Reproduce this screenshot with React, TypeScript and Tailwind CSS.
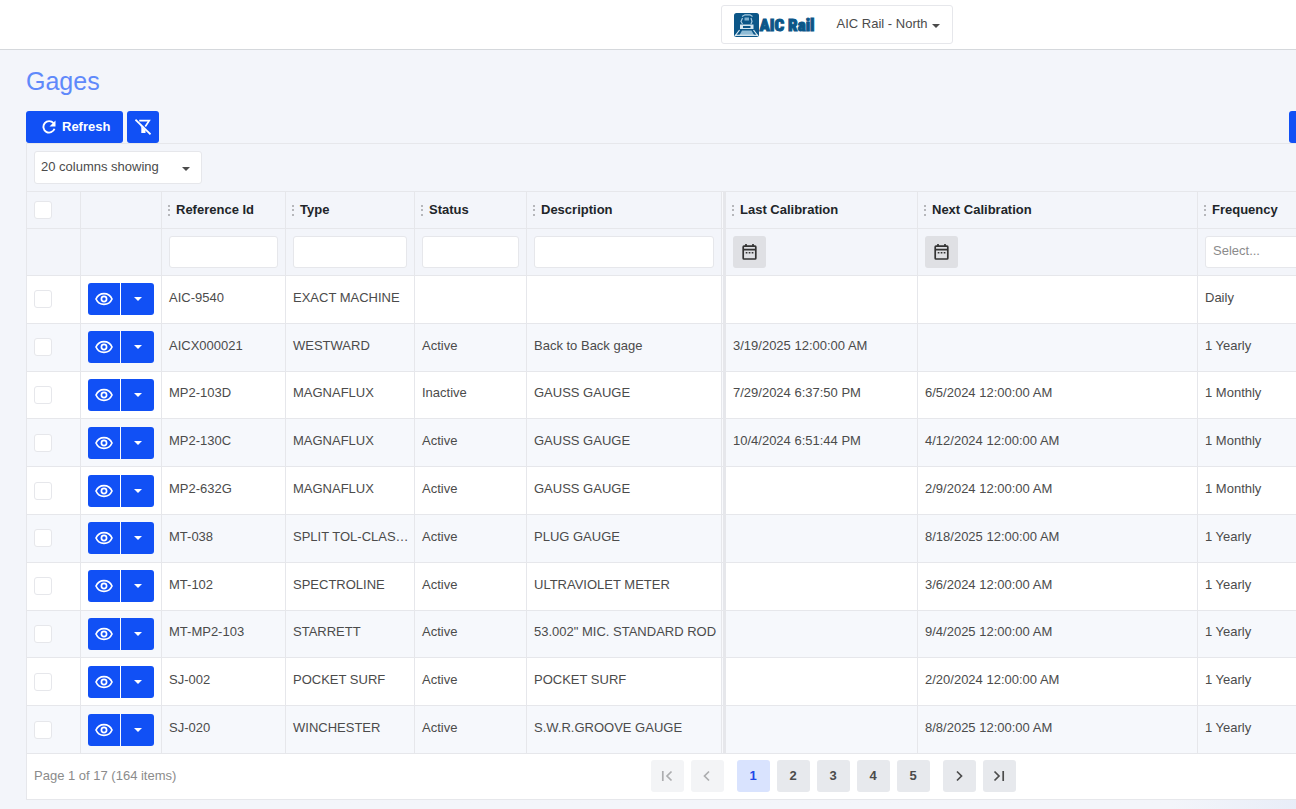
import { useState } from 'react'

type Gage = {
  id: string
  type: string
  status: string
  description: string
  last: string
  next: string
  frequency: string
}

const GAGES: Gage[] = [
  { id: 'AIC-9540', type: 'EXACT MACHINE', status: '', description: '', last: '', next: '', frequency: 'Daily' },
  { id: 'AICX000021', type: 'WESTWARD', status: 'Active', description: 'Back to Back gage', last: '3/19/2025 12:00:00 AM', next: '', frequency: '1 Yearly' },
  { id: 'MP2-103D', type: 'MAGNAFLUX', status: 'Inactive', description: 'GAUSS GAUGE', last: '7/29/2024 6:37:50 PM', next: '6/5/2024 12:00:00 AM', frequency: '1 Monthly' },
  { id: 'MP2-130C', type: 'MAGNAFLUX', status: 'Active', description: 'GAUSS GAUGE', last: '10/4/2024 6:51:44 PM', next: '4/12/2024 12:00:00 AM', frequency: '1 Monthly' },
  { id: 'MP2-632G', type: 'MAGNAFLUX', status: 'Active', description: 'GAUSS GAUGE', last: '', next: '2/9/2024 12:00:00 AM', frequency: '1 Monthly' },
  { id: 'MT-038', type: 'SPLIT TOL-CLAS…', status: 'Active', description: 'PLUG GAUGE', last: '', next: '8/18/2025 12:00:00 AM', frequency: '1 Yearly' },
  { id: 'MT-102', type: 'SPECTROLINE', status: 'Active', description: 'ULTRAVIOLET METER', last: '', next: '3/6/2024 12:00:00 AM', frequency: '1 Yearly' },
  { id: 'MT-MP2-103', type: 'STARRETT', status: 'Active', description: '53.002" MIC. STANDARD ROD', last: '', next: '9/4/2025 12:00:00 AM', frequency: '1 Yearly' },
  { id: 'SJ-002', type: 'POCKET SURF', status: 'Active', description: 'POCKET SURF', last: '', next: '2/20/2024 12:00:00 AM', frequency: '1 Yearly' },
  { id: 'SJ-020', type: 'WINCHESTER', status: 'Active', description: 'S.W.R.GROOVE GAUGE', last: '', next: '8/8/2025 12:00:00 AM', frequency: '1 Yearly' },
]

const HEADINGS = ['Reference Id', 'Type', 'Status', 'Description', 'Last Calibration', 'Next Calibration', 'Frequency']

const CELL = 'border-r border-b border-[#e6e7eb] px-[7px]'
// right edge of the pinned columns: a hairline, a gap, then a thick rule
const PINNED = 'border-r-[3px] border-b border-[#e6e7eb] pl-[7px] pr-[9px] shadow-[inset_-1px_0_0_#f8f9fc,inset_-2px_0_0_#e6e7eb]'

function Caret({ className }: { className: string }) {
  return (
    <svg viewBox="0 0 8 4" className={className} fill="currentColor" aria-hidden="true">
      <path d="M0 0h8L4 4z" />
    </svg>
  )
}

function EyeIcon() {
  return (
    <svg viewBox="0 0 18 14" className="h-[14px] w-[18px]" fill="none" stroke="currentColor" strokeWidth="1.7" aria-hidden="true">
      <path d="M1 7C2.6 3.4 5.5 1.6 9 1.6S15.4 3.4 17 7c-1.6 3.6-4.5 5.4-8 5.4S2.6 10.6 1 7z" />
      <circle cx="9" cy="7" r="2.6" />
    </svg>
  )
}

function RefreshIcon() {
  return (
    <svg viewBox="0 0 14 14" className="h-[14px] w-[14px]" aria-hidden="true">
      <path d="M11.5 3.2A5.7 5.7 0 1 0 12.5 8.8" fill="none" stroke="currentColor" strokeWidth="1.9" />
      <path d="M13.5 0.5v6h-6z" fill="currentColor" />
    </svg>
  )
}

function ClearFilterIcon() {
  return (
    <svg viewBox="0 0 16 16" className="h-4 w-4" aria-hidden="true">
      <path d="M4.2 1.7h10L10.3 7.5" fill="none" stroke="currentColor" strokeWidth="1.7" />
      <path d="M5.2 6.2l5.3 5V14H6.3V8.5z" fill="currentColor" />
      <path d="M0.5 0.7l15 14.6" stroke="currentColor" strokeWidth="1.7" />
    </svg>
  )
}

function CalendarIcon() {
  return (
    <svg viewBox="0 0 15 16" className="h-4 w-[15px]" fill="none" stroke="currentColor" aria-hidden="true">
      <rect x="1.2" y="2.2" width="12.6" height="12.8" rx="0.8" strokeWidth="1.7" />
      <path d="M4 0v3M11 0v3M1 5.7h13" strokeWidth="1.7" />
      <path d="M3.7 8.7h1.7M6.7 8.7h1.7M9.7 8.7h1.7" strokeWidth="1.6" />
    </svg>
  )
}

function Grip() {
  return (
    <svg viewBox="0 0 2 12" className="h-3 w-[2px] shrink-0" fill="#b6b7bb" aria-hidden="true">
      <path d="M0 1h2v2H0zM0 5h2v2H0zM0 10h2v2H0z" />
    </svg>
  )
}

function TrainLogo() {
  return (
    <svg viewBox="0 0 25 24" className="h-6 w-[25px]" aria-hidden="true">
      <rect width="25" height="24" rx="2.5" fill="#0b5688" />
      <path d="M8 3.5l3-1.7h5l2.5 1.7M8.5 5L7 8.5l1.5 2.5M17 5l1 3.5-1 2.5" fill="none" stroke="#a9cbe0" strokeWidth="1.2" />
      <path d="M10.5 4.5h4.5v3h-4.5z" fill="#7fb0cf" />
      <path d="M6 11.5h13.5v4.5H6z" fill="#d4e6f0" />
      <path d="M9 13h7.5v2H9z" fill="#0b5688" />
      <path d="M5.5 17L1 23M19.5 17L24 23" stroke="#dcebf3" strokeWidth="1.2" />
      <path d="M8 17.5h9.5l2.5 4.5H5.5z" fill="#8fbcd6" />
      <path d="M1 22.3h23" stroke="#e6f1f7" strokeWidth="1.2" />
    </svg>
  )
}

function PageArrow({ d }: { d: string }) {
  return (
    <svg viewBox="0 0 12 12" className="h-3 w-3" fill="none" stroke="currentColor" strokeWidth="1.7" aria-hidden="true">
      <path d={d} />
    </svg>
  )
}

function Tick({ label }: { label: string }) {
  return (
    <input
      type="checkbox"
      aria-label={label}
      className="block size-[18px] appearance-none rounded-[3px] border border-[#e6e7eb] bg-white checked:bg-[#1150f5]"
    />
  )
}

function FilterInput({ label }: { label: string }) {
  return <input type="text" aria-label={label} className="block h-8 w-full rounded-[3px] border border-[#e6e7eb] bg-white px-2" />
}

function DateFilter({ label }: { label: string }) {
  return (
    <button type="button" aria-label={label} className="flex h-8 w-[33px] items-center justify-center rounded-[3px] bg-[#dfe0e4] text-[#333]">
      <CalendarIcon />
    </button>
  )
}

const PAGE_BUTTON = 'flex h-8 w-[33px] items-center justify-center rounded-[3px]'

export default function App() {
  const [page, setPage] = useState(1)

  return (
    <div className="min-h-screen overflow-hidden bg-[#f3f5fa] font-['Liberation_Sans',Arial,sans-serif] text-[13px] leading-5 text-[#4b4b4b]">
      <header className="flex h-[50px] items-center justify-center border-b border-[#d5d8dc] bg-white pl-[378px]">
        <div className="flex h-[39px] items-center rounded-[3px] border border-[#e6e7eb] px-3">
          <a href="#home" aria-label="AIC Rail" className="flex items-center">
            <TrainLogo />
            <span className="font-['Roboto_Condensed','Roboto',sans-serif] text-[17px] font-black text-[#0b5688] [-webkit-text-stroke:1px_#0b5688]">
              AIC Rail
            </span>
          </a>
          <button type="button" className="ml-[22px] flex items-center gap-1 pb-[2px]">
            AIC Rail - North
            <Caret className="mt-1 h-[4px] w-[8px]" />
          </button>
        </div>
      </header>

      <main className="pl-[26px]">
        <div className="w-full min-w-[1614px]">
          <h1 className="pt-[13px] text-[25px] leading-9 text-[#5f89fa]">Gages</h1>

          <div className="mt-3 flex max-w-[1360px] justify-between">
            <div className="flex gap-1">
              <button type="button" className="flex h-8 items-center gap-[6px] rounded-[3px] bg-[#1150f5] pr-[13px] pl-4 font-bold text-white">
                <RefreshIcon />
                Refresh
              </button>
              <button type="button" aria-label="Clear filters" className="flex size-8 items-center justify-center rounded-[3px] bg-[#1150f5] text-white">
                <ClearFilterIcon />
              </button>
            </div>
            <button type="button" aria-label="Add gage" className="h-8 w-[97px] rounded-[3px] bg-[#1150f5]" />
          </div>

          <section className="border border-[#e6e7eb]">
            <div className="border-b border-[#e6e7eb] p-[7px]">
              <button type="button" className="flex h-[33px] w-[168px] items-center justify-between rounded-[3px] border border-[#e6e7eb] bg-white pr-[11px] pb-[2px] pl-[6px]">
                20 columns showing
                <Caret className="mt-1 h-[4px] w-[8px]" />
              </button>
            </div>

            <table className="w-full table-fixed border-separate border-spacing-0 text-left">
              <colgroup>
                <col className="w-[54px]" />
                <col className="w-[81px]" />
                <col className="w-[124px]" />
                <col className="w-[129px]" />
                <col className="w-[112px]" />
                <col className="w-[199px]" />
                <col className="w-[192px]" />
                <col className="w-[280px]" />
                <col />
              </colgroup>
              <thead className="text-[#212529]">
                <tr className="h-[37px]">
                  <th className={CELL}>
                    <Tick label="Select all gages" />
                  </th>
                  <th className={CELL} />
                  {HEADINGS.map((heading) => (
                    <th key={heading} className={heading === 'Description' ? PINNED : CELL}>
                      <div className="-ml-px flex items-center gap-[6px]">
                        <Grip />
                        {heading}
                      </div>
                    </th>
                  ))}
                </tr>
                <tr className="h-[47px]">
                  <td className={CELL} />
                  <td className={CELL} />
                  <td className={CELL}><FilterInput label="Filter reference id" /></td>
                  <td className={CELL}><FilterInput label="Filter type" /></td>
                  <td className={CELL}><FilterInput label="Filter status" /></td>
                  <td className={PINNED}><FilterInput label="Filter description" /></td>
                  <td className={CELL}><DateFilter label="Filter last calibration" /></td>
                  <td className={CELL}><DateFilter label="Filter next calibration" /></td>
                  <td className={CELL}>
                    <select aria-label="Filter frequency" defaultValue="" className="block h-8 w-full appearance-none rounded-[3px] border border-[#e6e7eb] bg-white px-[7px] pb-[2px] text-[#8b8b8b]">
                      <option value="">Select...</option>
                      <option>Daily</option>
                      <option>1 Monthly</option>
                      <option>1 Yearly</option>
                    </select>
                  </td>
                </tr>
              </thead>
              <tbody className="h-[478px]">
                {GAGES.map((gage) => (
                  <tr key={gage.id} className="bg-white even:bg-[#f6f8fc]">
                    <td className={CELL}>
                      <Tick label={`Select ${gage.id}`} />
                    </td>
                    <td className={CELL}>
                      <div className="flex gap-px text-white">
                        <button type="button" aria-label={`View ${gage.id}`} className="flex h-8 w-8 items-center justify-center rounded-l-[3px] bg-[#1150f5]">
                          <EyeIcon />
                        </button>
                        <button type="button" aria-label={`More actions for ${gage.id}`} className="flex h-8 w-[33px] items-center justify-center rounded-r-[3px] bg-[#1150f5]">
                          <Caret className="h-[4px] w-[8px]" />
                        </button>
                      </div>
                    </td>
                    <td className={`${CELL} pb-[3px]`}>{gage.id}</td>
                    <td className="border-r border-b border-[#e6e7eb] pr-px pb-[3px] pl-[7px] whitespace-nowrap">{gage.type}</td>
                    <td className={`${CELL} pb-[3px]`}>{gage.status}</td>
                    <td className={`${PINNED} pb-[3px] whitespace-nowrap`}>{gage.description}</td>
                    <td className={`${CELL} pb-[3px]`}>{gage.last}</td>
                    <td className={`${CELL} pb-[3px]`}>{gage.next}</td>
                    <td className={`${CELL} pb-[3px]`}>{gage.frequency}</td>
                  </tr>
                ))}
              </tbody>
            </table>

            <footer className="flex h-[45px] items-center bg-white px-[7px] pb-[2px]">
              <span className="flex-1 text-[#8b8b8b]">Page 1 of 17 (164 items)</span>
              <nav aria-label="Pages" className="flex gap-[7px] font-bold">
                <button type="button" disabled aria-label="First page" className={`${PAGE_BUTTON} bg-[#f3f4f6] text-[#acadaf]`}>
                  <PageArrow d="M1.8 1v10M10.5 1.5L6 6l4.5 4.5" />
                </button>
                <button type="button" disabled aria-label="Previous page" className={`${PAGE_BUTTON} bg-[#f3f4f6] text-[#acadaf]`}>
                  <PageArrow d="M8 1.5L3.5 6 8 10.5" />
                </button>
                <div className="mx-[6px] flex gap-[7px]">
                  {[1, 2, 3, 4, 5].map((n) => (
                    <button
                      key={n}
                      type="button"
                      onClick={() => setPage(n)}
                      className={`${PAGE_BUTTON} ${n === page ? 'bg-[#d9e3fe] text-[#1f48e8]' : 'bg-[#e7e9ed]'}`}
                    >
                      {n}
                    </button>
                  ))}
                </div>
                <button type="button" aria-label="Next page" className={`${PAGE_BUTTON} bg-[#e7e9ed]`}>
                  <PageArrow d="M4 1.5L8.5 6 4 10.5" />
                </button>
                <button type="button" aria-label="Last page" className={`${PAGE_BUTTON} bg-[#e7e9ed]`}>
                  <PageArrow d="M1.5 1.5L6 6l-4.5 4.5M10.2 1v10" />
                </button>
              </nav>
              <span className="flex-1" />
            </footer>
          </section>
          <div className="h-[9px] bg-linear-to-r from-[#f3f5fa] from-71% to-[#e8edf8] to-79%" />
        </div>
      </main>
    </div>
  )
}
